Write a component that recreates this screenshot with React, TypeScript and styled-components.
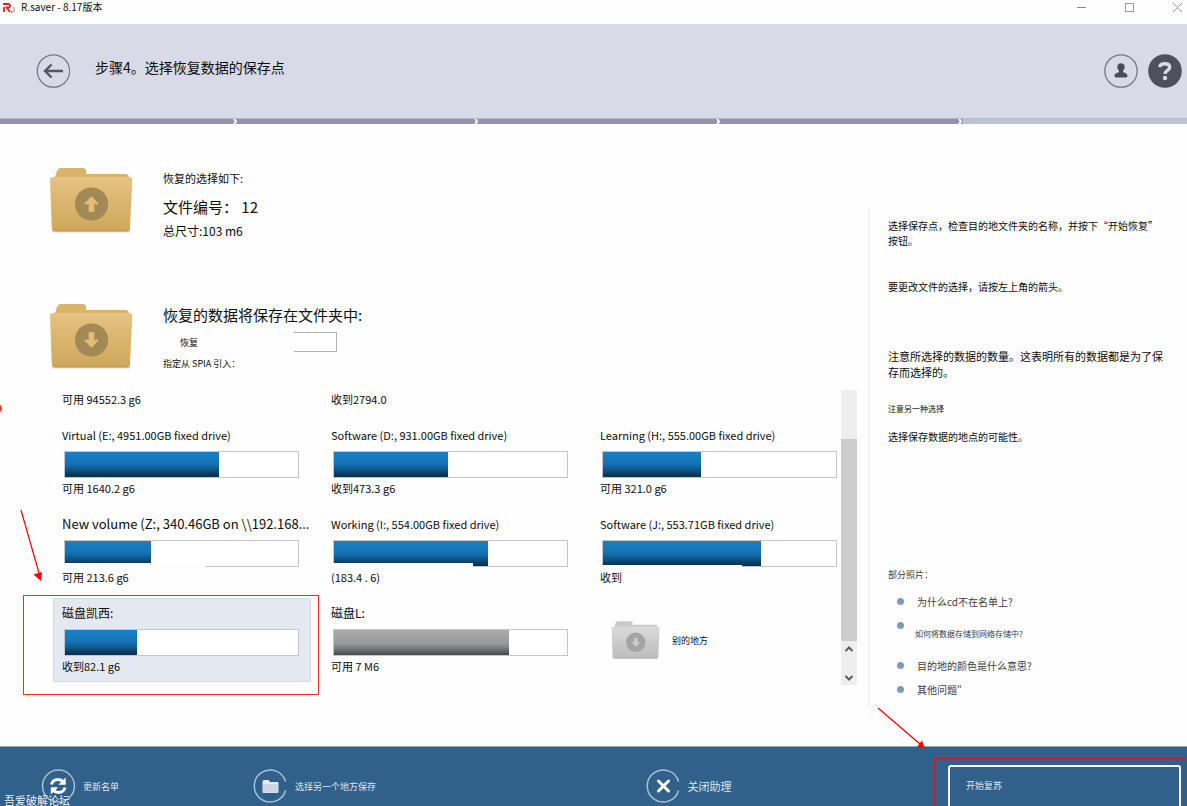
import React from "react";
import styled, { createGlobalStyle } from "styled-components";

const GlobalStyle = createGlobalStyle`
  *, *::before, *::after { box-sizing: border-box; }
  body {
    margin: 0;
    background: #fefefe;
    color: #0c0c0c;
    font-family: "Noto Sans CJK SC", "Noto Sans", sans-serif;
    font-size: 11px;
  }
  button, input { font: inherit; color: inherit; }
  button { padding: 0; border: 0; background: none; text-align: left; cursor: pointer; }
  svg { display: block; flex: none; }
`;

const Page = styled.div`
  display: flex;
  flex-direction: column;
  min-height: 100vh;
  overflow: hidden;
`;

/* ---------- window title bar ---------- */

const TitleBar = styled.div`
  display: flex;
  align-items: flex-start;
  height: 24px;
  padding-left: 3px;
`;

const AppIcon = styled.svg`
  margin: 2px 6px 0 0;
`;

const AppName = styled.span`
  flex: 1;
  font-size: 10px;
  line-height: 14px;
`;

const WindowButtons = styled.div`
  display: flex;
  gap: 36px;
  padding: 1px 4px 0 0;
`;

/* ---------- wizard header ---------- */

const Header = styled.header`
  display: flex;
  gap: 10px;
  height: 94px;
  padding: 30px 5px 0 36px;
  background: #d8dae7;
`;

const Title = styled.h1`
  flex: 1;
  margin: 0 0 0 15px;
  font-size: 14px;
  font-weight: 400;
  line-height: 26px;
`;

const RoundButton = styled.button`
  width: 34px;
  height: 34px;
`;

const Progress = styled.div`
  display: grid;
  grid-template-columns: 238fr 241fr 242fr 242fr 224fr;
  height: 6px;
  background: #bcc4d2;
  border-top: 1px solid #b4b8c4;
`;

const Step = styled.div<{ $done: boolean }>`
  display: flex;
  justify-content: flex-end;
  background: ${(p) => (p.$done ? "#9291b0" : "#bcc4d2")};
`;

/* ---------- body ---------- */

const Body = styled.div`
  display: flex;
  flex: 1;
`;

const Main = styled.main`
  position: relative;
  flex: 1;
  min-width: 0;
  padding: 42px 11px 61px 49px;
`;

const Summary = styled.section`
  display: flex;
  gap: 30px;
  height: 136px;
`;

const Destination = styled(Summary)`
  height: 88px;
`;

const Line = styled.div<{ $size: number; $height: number }>`
  font-size: ${(p) => p.$size}px;
  line-height: ${(p) => p.$height}px;
  white-space: pre;
`;

const FolderField = styled.div`
  display: flex;
  align-items: center;
  height: 20px;
  margin-top: 4px;
  padding-left: 17px;
  font-size: 9px;
`;

const FolderLabel = styled.label`
  width: 114px;
`;

const FolderInput = styled.input`
  width: 43px;
  height: 20px;
  padding: 0 4px;
  border: 1px solid #b2b2b2;
  border-left: 0;
  background: #fff;
  outline: 0;
`;

const DriveArea = styled.section`
  display: flex;
  justify-content: space-between;
  gap: 2px;
  margin-left: 4px;
`;

const DriveGrid = styled.div`
  flex: 1;
  display: grid;
  grid-template-columns: minmax(0, 258fr) minmax(0, 258fr) minmax(0, 248fr);
  grid-template-rows: 25px;
  grid-auto-rows: 84px;
  gap: 5px 11px;
  padding-bottom: 3px;
`;

const CutTile = styled.div`
  padding-left: 9px;
  font-size: 11px;
  line-height: 18px;
`;

const Tile = styled.button<{ $selected?: boolean }>`
  position: relative;
  padding: 3px 0 5px 8px;
  border: 1px solid ${(p) => (p.$selected ? "#d3dce6" : "transparent")};
  background: ${(p) => (p.$selected ? "#e4e9f1" : "transparent")};
`;

const DriveName = styled.span<{ $size?: number }>`
  display: block;
  font-size: ${(p) => p.$size ?? 11}px;
  line-height: 20px;
  white-space: nowrap;
`;

const Track = styled.span<{ $cutWidth?: number; $cutHeight?: number }>`
  position: relative;
  display: block;
  width: calc(100% - 2px);
  max-width: 235px;
  height: 27px;
  margin: 6px 0 0 2px;
  border: 1px solid #c3c6c9;
  background: #fff;

  &::after {
    content: "";
    position: absolute;
    left: -1px;
    bottom: -1px;
    width: ${(p) => p.$cutWidth ?? 0}px;
    height: ${(p) => p.$cutHeight ?? 0}px;
    background: #fefefe;
  }
`;

const Fill = styled.span<{ $gray?: boolean }>`
  display: block;
  height: 25px;
  background: ${(p) =>
    p.$gray
      ? "linear-gradient(#a9abad, #98999b 55%, #6c6d70 80%, #45464a)"
      : "linear-gradient(#1a80c4, #1574b5 45%, #105f96 65%, #0a3c60 88%, #0a304c)"};
`;

const OtherPlace = styled.button`
  display: flex;
  align-items: center;
  gap: 12px;
  padding-left: 20px;
  font-size: 9px;
`;

const Scrollbar = styled.div`
  display: flex;
  flex-direction: column;
  width: 16px;
  padding-top: 49px;
  background: #eceef1;
`;

const Thumb = styled.div`
  flex: 1;
  background: #cdcdcd;
`;

const ScrollButton = styled.button`
  display: flex;
  align-items: center;
  justify-content: center;
  height: 15px;

  & + & { margin-top: 14px; }
`;

/* ---------- help column ---------- */

const Aside = styled.aside`
  position: relative;
  width: 319px;
  margin: 84px 0 41px;
  padding: 10px 20px 0 18px;
  border-left: 2px solid #f1f1f3;
`;

const Note = styled.p<{ $size?: number; $height?: number; $gap?: number }>`
  margin: ${(p) => p.$gap ?? 0}px 0 0;
  font-size: ${(p) => p.$size ?? 10}px;
  line-height: ${(p) => p.$height ?? 16}px;
`;

const FaqTitle = styled.h2`
  margin: 122px 0 9px;
  color: #3c3c40;
  font-size: 9px;
  font-weight: 400;
  line-height: 16px;
`;

const FaqList = styled.ul`
  display: grid;
  gap: 4px;
  margin: 0;
  padding: 0 0 0 9px;
  list-style: none;
`;

const FaqItem = styled.li<{ $small?: boolean }>`
  display: flex;
  gap: ${(p) => (p.$small ? 11 : 13)}px;
  font-size: ${(p) => (p.$small ? 8 : 10)}px;
  line-height: ${(p) => (p.$small ? 36 : 20)}px;

  &::before {
    content: "";
    width: 7px;
    height: 7px;
    margin-top: 6px;
    border-radius: 50%;
    background: #7f9bb8;
  }
`;

const FaqLink = styled.a`
  color: #3c3c40;
  text-decoration: none;
`;

/* ---------- footer ---------- */

const Footer = styled.footer`
  position: relative;
  display: grid;
  grid-template-columns: 212px minmax(0, 392fr) minmax(0, 302fr) 233px;
  align-items: start;
  height: 60px;
  padding: 0 6px 0 41px;
  overflow: hidden;
  border-top: 1px solid #86a9bf;
  background: #31608a;
  color: #dbe7f1;
`;

const FooterButton = styled.button<{ $size?: number }>`
  display: flex;
  align-items: center;
  gap: 8px;
  margin-top: 22px;
  font-size: ${(p) => p.$size ?? 9}px;
`;

const StartWrap = styled.div`
  position: relative;
  margin-top: 18px;
`;

const StartButton = styled.button`
  display: flex;
  align-items: flex-start;
  width: 100%;
  height: 50px;
  padding: 9px 0 0 16px;
  border: 2px solid #f4f8fb;
  border-radius: 3px;
  font-size: 9px;
  line-height: 20px;
`;

const Watermark = styled.span`
  position: absolute;
  left: 4px;
  bottom: 0;
  color: #f2f5f8;
  font-size: 11px;
  line-height: 12px;
  text-shadow: 0 0 1px #1c3a55;
`;

/* ---------- red annotations ---------- */

const TileMark = styled.span`
  position: absolute;
  inset: -4px -9px -14px -31px;
  border: 1px solid #fb2a2a;
  pointer-events: none;
`;

const StartMark = styled.span`
  position: absolute;
  inset: -7px -5px -14px -14px;
  border: 1px solid #d3142a;
  pointer-events: none;
`;

const TileArrow = styled.svg`
  position: absolute;
  left: -35px;
  top: -90px;
`;

const FooterArrow = styled.svg`
  position: absolute;
  left: 7px;
  top: 499px;
  z-index: 1;
`;

const RedDot = styled.span`
  position: absolute;
  left: -7px;
  top: 280px;
  width: 9px;
  height: 9px;
  border-radius: 50%;
  background: #f23c35;
`;

type FolderProps = { id: string; up?: boolean; gray?: boolean; width: number; height: number };

function Folder({ id, up, gray, width, height }: FolderProps) {
  const c = gray
    ? { back: "#c9c9c9", top: "#dadada", bottom: "#bcbcbc", disc: "#a3a4a6", arrow: "#cdcdcd", edge: "#b2b2b2" }
    : { back: "#d9b468", top: "#e6c282", bottom: "#cfa75c", disc: "#a28a56", arrow: "#e3bd78", edge: "#b8934e" };
  return (
    <svg width={width} height={height} viewBox="0 0 84 68" preserveAspectRatio="none" aria-hidden="true">
      <defs>
        <linearGradient id={id} x1="0" y1="0" x2="0" y2="1">
          <stop offset="0" stopColor={c.top} />
          <stop offset="1" stopColor={c.bottom} />
        </linearGradient>
      </defs>
      <path d="M3 64.5h78v2H3z" fill="#9a9aa8" opacity=".35" />
      <path d="M5 14l3-9q1-3 4-3h22q3 0 3 3v3h39q4 0 4 4v8H5z" fill={c.back} />
      <path d="M4 11h76q3.500 0 3.300 3L81 62q-.2 3-3 3H6q-3 0-3.200-3L1 14q-.2-3 3-3z" fill={`url(#${id})`} />
      <path d="M3 63.500q1 1.500 3 1.500h72q2 0 3-1.500" fill="none" stroke={c.edge} />
      <circle cx="42.500" cy="38" r="16.600" fill={c.disc} />
      <path
        d="M42.500 30.500l7 7.500h-4.500v7.500h-5v-7.500h-4.500z"
        fill={c.arrow}
        stroke={c.arrow}
        strokeWidth=".6"
        strokeLinejoin="round"
        transform={up ? undefined : "rotate(180 42.5 38)"}
      />
    </svg>
  );
}

type Drive = {
  name: string;
  free: string;
  used: number;
  size?: number;
  gray?: boolean;
  selected?: boolean;
  cut?: [number, number];
};

const drives: Drive[] = [
  { name: "Virtual (E:, 4951.00GB fixed drive)", free: "可用 1640.2 g6", used: 66 },
  { name: "Software (D:, 931.00GB fixed drive)", free: "收到473.3 g6", used: 49 },
  { name: "Learning (H:, 555.00GB fixed drive)", free: "可用 321.0 g6", used: 42 },
  { name: "New volume (Z:, 340.46GB on \\\\192.168...", size: 13, free: "可用 213.6 g6", used: 37, cut: [141, 4] },
  { name: "Working (I:, 554.00GB fixed drive)", free: "(183.4 . 6)", used: 66, cut: [140, 4] },
  { name: "Software (J:, 553.71GB fixed drive)", free: "收到", used: 68, cut: [140, 2] },
  { name: "磁盘凯西:", size: 12, free: "收到82.1 g6", used: 31, selected: true },
  { name: "磁盘L:", size: 12, free: "可用 7 M6", used: 75, gray: true },
];

function DriveTile({ drive }: { drive: Drive }) {
  return (
    <Tile type="button" $selected={drive.selected} aria-pressed={!!drive.selected}>
      <DriveName $size={drive.size}>{drive.name}</DriveName>
      <Track $cutWidth={drive.cut?.[0]} $cutHeight={drive.cut?.[1]}>
        <Fill $gray={drive.gray} style={{ width: `${drive.used}%` }} />
      </Track>
      <DriveName>{drive.free}</DriveName>
      {drive.selected && (
        <>
          <TileMark />
          <TileArrow width="26" height="74" aria-hidden="true">
            <path d="M2 1l18 63" stroke="#f00" strokeWidth="1.200" />
            <path d="M22 72l-7.500-6.500 8.500-2.500z" fill="#f00" />
          </TileArrow>
        </>
      )}
    </Tile>
  );
}

const Ring = ({ children, cut }: { children: React.ReactNode; cut?: boolean }) => (
  <svg width="34" height="34" viewBox="0 0 34 34" aria-hidden="true">
    {cut ? (
      <path d="M32.600 12.500A16 16 0 1 0 32.600 21.500" fill="none" stroke="#a9c1d6" strokeWidth="1.500" />
    ) : (
      <circle cx="17.500" cy="17" r="16" fill="none" stroke="#a9c1d6" strokeWidth="1.500" />
    )}
    {children}
  </svg>
);

export default function App() {
  return (
    <Page lang="zh-CN">
      <GlobalStyle />
      <TitleBar>
        <AppIcon width="12" height="12" viewBox="0 0 12 12" aria-hidden="true">
          <path d="M0 2h5q2 0 2 1.700T5 5.500H2.500M4 6l3 4M1 5v5" fill="none" stroke="#d9251d" strokeWidth="1.800" />
          <path d="M8 10h1.500" stroke="#d9251d" strokeWidth="1.500" />
          <path d="M11 5v5" stroke="#8d8d78" strokeWidth="1" />
        </AppIcon>
        <AppName>R.saver - 8.17版本</AppName>
        <WindowButtons>
          <button type="button" aria-label="最小化">
            <svg width="12" height="12"><path d="M2 6.500h9" stroke="#8a8a8a" /></svg>
          </button>
          <button type="button" aria-label="最大化">
            <svg width="12" height="12"><rect x="2.500" y="2.500" width="8" height="8" fill="none" stroke="#9a9a9a" /></svg>
          </button>
          <button type="button" aria-label="关闭">
            <svg width="12" height="12"><path d="M2 2l9 9M11 2l-9 9" stroke="#9a9a9a" /></svg>
          </button>
        </WindowButtons>
      </TitleBar>

      <Header>
        <RoundButton type="button" aria-label="返回">
          <svg width="34" height="34" viewBox="0 0 34 34">
            <circle cx="17.500" cy="17" r="16.200" fill="none" stroke="#77787e" strokeWidth="1.300" />
            <path d="M27 17H9.500M15.500 10.500L9 17l6.500 6.500" fill="none" stroke="#57585e" strokeWidth="2.400" />
          </svg>
        </RoundButton>
        <Title>步骤4。选择恢复数据的保存点</Title>
        <RoundButton type="button" aria-label="用户">
          <svg width="34" height="34" viewBox="0 0 34 34">
            <circle cx="17" cy="17" r="16.200" fill="none" stroke="#77787e" strokeWidth="1.300" />
            <path d="M17 9.300c2.300 0 3.700 1.600 3.700 3.800 0 1.600-.9 2.700-1.600 3.600v1.500c2.400.8 4.400 1.500 4.400 3.600 0 1.200-.6 1.700-1.500 1.700H12c-.9 0-1.500-.5-1.500-1.700 0-2.100 2-2.800 4.400-3.600v-1.500c-.7-.9-1.600-2-1.600-3.600 0-2.200 1.400-3.800 3.700-3.800z" fill="#4b4d55" />
          </svg>
        </RoundButton>
        <RoundButton type="button" aria-label="帮助">
          <svg width="34" height="34" viewBox="0 0 34 34">
            <circle cx="17" cy="17" r="16.800" fill="#4d515b" />
            <path d="M11.800 13.200c.2-2.400 2-3.500 4.900-3.500 3.100 0 5 1.300 5 3.600 0 3.300-4.700 3-4.700 6.700" fill="none" stroke="#d8dae7" strokeWidth="3.400" />
            <circle cx="17" cy="24" r="2.200" fill="#d8dae7" />
          </svg>
        </RoundButton>
      </Header>

      <Progress role="progressbar" aria-label="步骤" aria-valuemin={0} aria-valuemax={5} aria-valuenow={4}>
        {[1, 2, 3, 4, 5].map((n) => (
          <Step key={n} $done={n < 5}>
            {n < 5 && (
              <svg width="5" height="5" viewBox="0 0 5 5" aria-hidden="true">
                <path d="M1 0l2 2.500L1 5" fill="none" stroke="#fff" strokeWidth="2" />
              </svg>
            )}
          </Step>
        ))}
      </Progress>

      <Body>
        <Main>
          <RedDot />
          <Summary>
            <Folder id="folder-source" up width={84} height={68} />
            <div>
              <Line $size={11} $height={24}>恢复的选择如下:</Line>
              <Line $size={15} $height={34}>文件编号： 12</Line>
              <Line $size={12} $height={14}>总尺寸:103 m6</Line>
            </div>
          </Summary>

          <Destination>
            <Folder id="folder-target" width={84} height={68} />
            <div>
              <Line $size={15} $height={26}>恢复的数据将保存在文件夹中:</Line>
              <FolderField>
                <FolderLabel htmlFor="folder-name">恢复</FolderLabel>
                <FolderInput id="folder-name" type="text" />
              </FolderField>
              <Line $size={9} $height={24}>指定从 SPIA 引入：</Line>
            </div>
          </Destination>

          <DriveArea>
            <DriveGrid>
              <CutTile>可用 94552.3 g6</CutTile>
              <CutTile>收到2794.0</CutTile>
              <CutTile />
              {drives.map((d) => (
                <DriveTile key={d.name} drive={d} />
              ))}
              <OtherPlace type="button">
                <Folder id="folder-other" gray width={49} height={40} />
                别的地方
              </OtherPlace>
            </DriveGrid>
            <Scrollbar>
              <Thumb />
              <ScrollButton type="button" aria-label="向上">
                <svg width="10" height="8"><path d="M1.500 6L5 2.500 8.500 6" fill="none" stroke="#5c5c5c" strokeWidth="2" /></svg>
              </ScrollButton>
              <ScrollButton type="button" aria-label="向下">
                <svg width="10" height="8"><path d="M1.500 2L5 5.500 8.500 2" fill="none" stroke="#5c5c5c" strokeWidth="2" /></svg>
              </ScrollButton>
            </Scrollbar>
          </DriveArea>
        </Main>

        <Aside>
          <Note $height={15}>选择保存点，检查目的地文件夹的名称，并按下“开始恢复”按钮。</Note>
          <Note $gap={31}>要更改文件的选择，请按左上角的箭头。</Note>
          <Note $size={11} $gap={53}>注意所选择的数据的数量。这表明所有的数据都是为了保存而选择的。</Note>
          <Note $size={8} $gap={21}>注意另一种选择</Note>
          <Note $gap={12}>选择保存数据的地点的可能性。</Note>
          <FaqTitle>部分照片：</FaqTitle>
          <FaqList>
            <FaqItem><FaqLink href="#cd">为什么cd不在名单上?</FaqLink></FaqItem>
            <FaqItem $small><FaqLink href="#network">如何将数据存储到网络存储中?</FaqLink></FaqItem>
            <FaqItem><FaqLink href="#colors">目的地的颜色是什么意思?</FaqLink></FaqItem>
            <FaqItem><FaqLink href="#other">其他问题"</FaqLink></FaqItem>
          </FaqList>
          <FooterArrow width="52" height="44" aria-hidden="true">
            <path d="M1 1l42 36" stroke="#f00" strokeWidth="1.200" />
            <path d="M48 41.500l-8-1.500 5-6.500z" fill="#f00" />
          </FooterArrow>
        </Aside>
      </Body>

      <Footer>
        <FooterButton type="button">
          <Ring>
            <path d="M10.500 15.500c.8-3.400 3.300-5 6.500-5 2.200 0 3.900.8 5.200 2.300" fill="none" stroke="#fff" strokeWidth="3" />
            <path d="M24.700 8.500v7.300h-7.400z" fill="#fff" />
            <path d="M24 18.500c-.8 3.400-3.300 5-6.500 5-2.200 0-3.900-.8-5.200-2.300" fill="none" stroke="#fff" strokeWidth="3" />
            <path d="M9.800 25.500v-7.300h7.400z" fill="#fff" />
          </Ring>
          更新名单
        </FooterButton>
        <FooterButton type="button">
          <Ring cut>
            <path d="M9.500 12.500q0-1.500 1.500-1.500h4.500l1.500 2h7.500q1 0 1 1v9q0 1-1 1h-14q-1 0-1-1z" fill="#e6ebf2" />
            <path d="M10 15h15v8.500h-15z" fill="#cdd5e3" />
          </Ring>
          选择另一个地方保存
        </FooterButton>
        <FooterButton type="button" $size={11}>
          <Ring cut>
            <path d="M12.500 12l10 10M22.500 12l-10 10" stroke="#fff" strokeWidth="3" strokeLinecap="round" />
          </Ring>
          关闭助理
        </FooterButton>
        <StartWrap>
          <StartMark />
          <StartButton type="button">开始复苏</StartButton>
        </StartWrap>
        <Watermark>吾爱破解论坛</Watermark>
      </Footer>
    </Page>
  );
}
